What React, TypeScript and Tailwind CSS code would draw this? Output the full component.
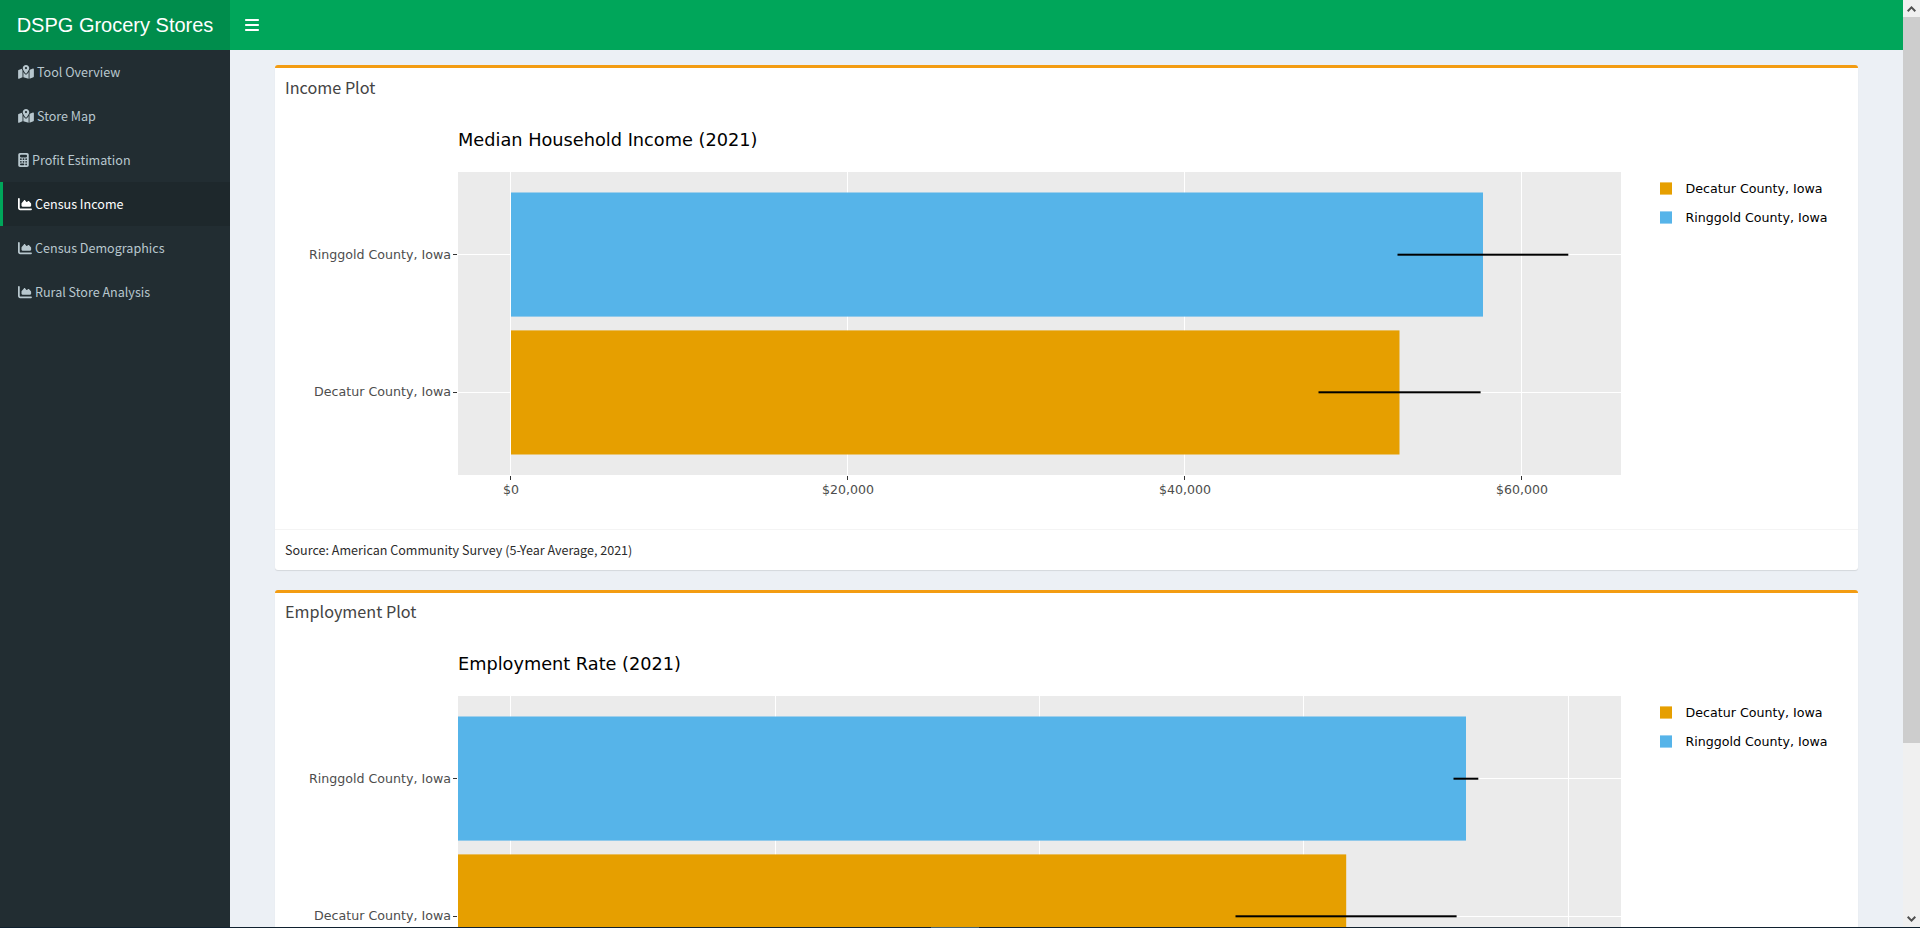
import type { ReactNode } from "react";
import { FaBars, FaCalculator, FaChartArea, FaMapLocationDot } from "react-icons/fa6";

const ORANGE = "#E69F00";
const BLUE = "#56B4E9";
const sans = "font-['Noto_Sans_CJK_SC',sans-serif]";

type Series = { top: number; right: number; color: string; err: [number, number]; errY: number };
type ChartProps = {
  title: string;
  titleWidth: number;
  barLeft: number;
  grid: number[];
  ticks?: { x: number; label: string; width: number }[];
  series: Series[];
};

const rows = [
  { y: 254.5, baseline: 259, label: "Ringgold County, Iowa", x: 309, width: 142 },
  { y: 392.5, baseline: 396, label: "Decatur County, Iowa", x: 314, width: 137 },
];

function Chart({ title, titleWidth, barLeft, grid, ticks = [], series }: ChartProps) {
  return (
    <svg width="1583" height="421" viewBox="275 108 1583 421" className="block shrink-0" fontFamily="'DejaVu Sans', sans-serif">
      <text x="458" y="146" fontSize="17.5" textLength={titleWidth} lengthAdjust="spacingAndGlyphs">{title}</text>
      <rect x="458" y="172" width="1163" height="303" fill="#EBEBEB" />
      {grid.map((x) => (
        <rect key={x} x={x} y="172" width="1" height="303" fill="#fff" />
      ))}
      {rows.map((r) => (
        <rect key={r.y} x="458" y={r.y - 0.5} width="1163" height="1" fill="#fff" />
      ))}
      {series.map((s) => (
        <rect key={s.top} x={barLeft} y={s.top} width={s.right - barLeft} height="124.1" fill={s.color} />
      ))}
      {series.map((s) => (
        <rect key={s.top} x={s.err[0]} y={s.errY} width={s.err[1] - s.err[0]} height="2" fill="#000" />
      ))}
      {rows.map((r) => (
        <g key={r.y}>
          <text x={r.x} y={r.baseline} fontSize="13" fill="#4D4D4D" textLength={r.width} lengthAdjust="spacingAndGlyphs">{r.label}</text>
          <rect x="453" y={r.y - 0.5} width="4" height="1" fill="#333" />
        </g>
      ))}
      {ticks.map((t) => (
        <g key={t.x}>
          <rect x={t.x} y="476" width="1" height="4" fill="#333" />
          <text x={t.x + 1 - t.width / 2} y="494" fontSize="13" fill="#4D4D4D" textLength={t.width} lengthAdjust="spacingAndGlyphs">{t.label}</text>
        </g>
      ))}
      <rect x="1660" y="182.4" width="12" height="12.2" fill={ORANGE} />
      <text x="1685.5" y="193" fontSize="13" textLength="137" lengthAdjust="spacingAndGlyphs">Decatur County, Iowa</text>
      <rect x="1660" y="211.4" width="12" height="12.2" fill={BLUE} />
      <text x="1685.5" y="222" fontSize="13" textLength="142" lengthAdjust="spacingAndGlyphs">Ringgold County, Iowa</text>
    </svg>
  );
}

function Box({ title, headerClass, children, footer }: { title: string; headerClass: string; children: ReactNode; footer: string }) {
  return (
    <section className="mb-5 flex h-[505px] shrink-0 flex-col rounded-[3px] border-t-[3px] border-[#f39c12] bg-white shadow-[0_1px_1px_rgba(0,0,0,0.1)]">
      <header className={`flex shrink-0 items-center px-2.5 ${headerClass}`}>
        <h3 className={`${sans} whitespace-nowrap text-[16.2px] leading-5 text-[#444]`}>{title}</h3>
      </header>
      {children}
      <footer className={`${sans} flex flex-1 items-center border-t border-[#f4f4f4] px-2.5 text-[12.57px] text-[#2b2b2b]`}>{footer}</footer>
    </section>
  );
}

const nav = [
  { label: "Tool Overview", Icon: FaMapLocationDot, w: "w-4" },
  { label: "Store Map", Icon: FaMapLocationDot, w: "w-4" },
  { label: "Profit Estimation", Icon: FaCalculator, w: "w-[11px]" },
  { label: "Census Income", Icon: FaChartArea, w: "w-[14px]", active: true },
  { label: "Census Demographics", Icon: FaChartArea, w: "w-[14px]" },
  { label: "Rural Store Analysis", Icon: FaChartArea, w: "w-[14px]" },
];

export default function App() {
  return (
    <div className="flex h-[928px] w-[1920px] flex-col overflow-hidden bg-[#ecf0f5]">
      <div className="flex min-h-0 flex-1">
        <aside className="flex w-[230px] shrink-0 flex-col bg-[#222d32]">
          <div className="flex h-[50px] items-center justify-center bg-[#008d4c] font-['Liberation_Sans',sans-serif] text-xl text-white">
            DSPG Grocery Stores
          </div>
          <nav className={`${sans} flex flex-col text-[12.57px]`}>
            {nav.map(({ label, Icon, w, active }) => (
              <a
                key={label}
                className={`flex h-11 items-center gap-[3px] border-l-[3px] pl-[15px] whitespace-nowrap ${active ? "border-[#00a65a] bg-[#1e282c] text-white" : "border-transparent text-[#b8c7ce]"}`}
              >
                <Icon className={`h-[14px] shrink-0 ${w}`} />
                <span>{label}</span>
              </a>
            ))}
          </nav>
        </aside>
        <div className="flex min-w-0 flex-1 flex-col overflow-hidden">
          <div className="flex h-[50px] shrink-0 items-center bg-[#00a65a] pb-px pl-[15px] text-white">
            <FaBars className="h-4 w-[14px]" />
          </div>
          <main className="flex min-h-0 flex-1 flex-col overflow-hidden pt-[15px] pr-[45px] pl-[45px]">
            <Box title="Income Plot" headerClass="h-10 pb-[2px]" footer="Source: American Community Survey (5-Year Average, 2021)">
              <Chart
                title="Median Household Income (2021)"
                titleWidth={299.5}
                barLeft={511}
                grid={[510, 847, 1184, 1521]}
                ticks={[
                  { x: 510, label: "$0", width: 16 },
                  { x: 847, label: "$20,000", width: 52 },
                  { x: 1184, label: "$40,000", width: 52 },
                  { x: 1521, label: "$60,000", width: 52 },
                ]}
                series={[
                  { top: 192.5, right: 1483, color: BLUE, err: [1397.5, 1568.3], errY: 253.7 },
                  { top: 330.4, right: 1399.5, color: ORANGE, err: [1318.5, 1480.6], errY: 391.3 },
                ]}
              />
            </Box>
            <Box title="Employment Plot" headerClass="h-[39px] pb-[3px]" footer="Source: American Community Survey (5-Year Average, 2021)">
              <Chart
                title="Employment Rate (2021)"
                titleWidth={223}
                barLeft={458}
                grid={[510, 775, 1039, 1303, 1568]}
                series={[
                  { top: 192.5, right: 1466, color: BLUE, err: [1453.5, 1478.3], errY: 253.7 },
                  { top: 330.4, right: 1346.2, color: ORANGE, err: [1235.5, 1456.6], errY: 391.3 },
                ]}
              />
            </Box>
          </main>
        </div>
        <div className="flex w-[17px] shrink-0 flex-col bg-[#f0f0f0]">
          <div className="flex h-[17px] items-center justify-center">
            <svg width="9" height="6" viewBox="0 0 9 6"><path d="M0.7 5.2 4.5 1.4 8.3 5.2" fill="none" stroke="#505050" strokeWidth="2" /></svg>
          </div>
          <div className="h-[726px] bg-[#cdcdcd]" />
          <div className="flex-1" />
          <div className="flex h-[17px] items-center justify-center">
            <svg width="9" height="6" viewBox="0 0 9 6"><path d="M0.7 0.8 4.5 4.6 8.3 0.8" fill="none" stroke="#505050" strokeWidth="2" /></svg>
          </div>
        </div>
      </div>
      <div className="flex h-px shrink-0 bg-[#10212f] pl-[931px]">
        <div className="w-12 bg-[#46626e]" />
      </div>
    </div>
  );
}
